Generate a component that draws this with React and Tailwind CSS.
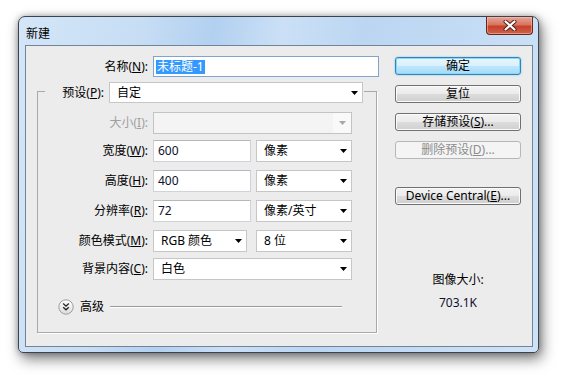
import React from "react";

function Arrow({ disabled }) {
  return (
    <svg width="7" height="4" viewBox="0 0 7 4" className="shrink-0">
      <path d="M0 0h7L3.5 4z" fill={disabled ? "#a8a8a8" : "#000"} />
    </svg>
  );
}

function Combo({ className = "", children, disabled }) {
  if (disabled) {
    return (
      <div className={"flex h-full border border-[#c3c3c3] bg-[#f4f4f4] " + className}>
        <div className="flex-1" />
        <div className="w-[18px] flex items-center justify-center bg-[#f9f9f9]">
          <Arrow disabled />
        </div>
      </div>
    );
  }
  return (
    <div className={"flex items-center justify-between h-full border border-[#c6c6c6] bg-white pl-[7px] pr-[4px] " + className}>
      <span>{children}</span>
      <Arrow />
    </div>
  );
}

function Field({ className = "", children }) {
  return (
    <div className={"flex items-center h-full border border-[#cfd3d8] border-t-[#b4b8be] bg-white pl-[4px] text-[#101030] " + className}>
      {children}
    </div>
  );
}

function Row({ label, k, className = "", disabled, children }) {
  return (
    <div className={"flex items-center h-[22px] " + className}>
      <div className={"w-[110px] text-right " + (disabled ? "text-[#a0a0a0]" : "")}>
        {label}(<span className="underline">{k}</span>):
      </div>
      <div className="flex h-full ml-[5px]">{children}</div>
    </div>
  );
}

function Btn({ children, kind = "normal", className = "" }) {
  const styles = {
    normal:
      "border-[#707070] bg-[linear-gradient(#f3f3f3,#ebebeb_48%,#dcdcdc_52%,#cfcfcf)] shadow-[inset_0_0_0_1px_#fbfbfb]",
    primary:
      "border-[#3c7fb1] bg-[linear-gradient(#eaf6fd,#d9f0fc_48%,#bee6fd_52%,#a7d9f5)] shadow-[inset_0_0_0_1px_#7fdcff,0_0_2px_#5fc4f5]",
    disabled: "border-[#b5b8ba] bg-[#f4f4f4] text-[#8c8c8c]",
  };
  return (
    <div className={"w-[126px] h-[18px] rounded-[3px] border flex items-center justify-center leading-none " + styles[kind] + " " + className}>
      {children}
    </div>
  );
}

function AdvIcon() {
  return (
    <svg width="16" height="16" viewBox="0 0 16 16">
      <defs>
        <linearGradient id="ag" x1="0" y1="0" x2="0" y2="1">
          <stop offset="0" stopColor="#ffffff" />
          <stop offset="1" stopColor="#dcdcdc" />
        </linearGradient>
      </defs>
      <circle cx="8" cy="8" r="7.2" fill="url(#ag)" stroke="#9c9c9c" />
      <path d="M5.2 4.6l2.8 2.6 2.8-2.6M5.2 8.2l2.8 2.6 2.8-2.6" fill="none" stroke="#222" strokeWidth="1.3" />
    </svg>
  );
}

export default function App() {
  return (
    <div className="w-[567px] h-[375px] bg-white pt-[16px] pl-[18px] text-[12px] text-black font-['Noto_Sans','Noto_Sans_CJK_SC',sans-serif] overflow-hidden">
      <div className="flex flex-col w-[521px] h-[337px] rounded-t-[7px] rounded-b-[5px] border border-[#3a4450] bg-[linear-gradient(100deg,#d4e6f8_0%,#c6ddf4_22%,#b2d0f0_34%,#cbe0f6_46%,#bcd6f2_60%,#c3dbf4_78%,#cfe3f7_100%)] shadow-[3px_6px_14px_rgba(0,0,0,0.5),0_0_6px_rgba(0,0,0,0.3)]">
        <div className="h-[28px] flex justify-between pl-[7px]">
          <span className="mt-[8px] leading-[17px]">新建</span>
          <div className="w-[47px] h-[18px] mr-[5px] rounded-b-[4px] border border-t-0 border-[#6b2418] bg-[linear-gradient(#e9a597,#d77560_45%,#c5412a_55%,#d0624b)] shadow-[inset_0_0_0_1px_rgba(255,200,190,0.5)] flex items-center justify-center">
            <svg width="14" height="11" viewBox="0 0 14 11">
              <path d="M2.5 1.5l9 8M11.5 1.5l-9 8" stroke="#4a2018" strokeWidth="4" strokeLinecap="round" />
              <path d="M2.5 1.5l9 8M11.5 1.5l-9 8" stroke="#ffffff" strokeWidth="2.2" strokeLinecap="round" />
            </svg>
          </div>
        </div>

        <div className="flex-1 mx-[6px] mb-[5px] mr-[5px] border border-[#71849a] bg-[#ececec] flex">
          <div className="w-[342px] flex flex-col ml-[11px] pt-[10px]">
            <div className="flex items-center h-[21px]">
              <div className="w-[111px] text-right">
                名称(<span className="underline">N</span>):
              </div>
              <div className="ml-[5px] w-[226px] h-full border border-[#7fa5cf] bg-white flex items-center pl-[2px]">
                <span className="bg-[#3399ff] text-white leading-[14px] px-[1px]">未标题-1</span>
              </div>
            </div>

            <div className="mt-[14px] w-[340px] h-[242px] border border-[#a9a9a9] shadow-[1px_1px_0_#fff] flex flex-col">
              <div className="-mt-[10px] ml-[7px] w-[319px] h-[21px] bg-[#ececec] flex items-center">
                <div className="w-[59px] text-right">
                  预设(<span className="underline">P</span>):
                </div>
                <Combo className="ml-[5px] w-[254px]">自定</Combo>
              </div>

              <Row label="大小" k="I" disabled className="mt-[9px]">
                <Combo disabled className="w-[199px]" />
              </Row>
              <Row label="宽度" k="W" className="mt-[6px]">
                <Field className="w-[98px]">600</Field>
                <Combo className="w-[96px] ml-[5px]">像素</Combo>
              </Row>
              <Row label="高度" k="H" className="mt-[8px]">
                <Field className="w-[98px]">400</Field>
                <Combo className="w-[96px] ml-[5px]">像素</Combo>
              </Row>
              <Row label="分辨率" k="R" className="mt-[8px]">
                <Field className="w-[98px]">72</Field>
                <Combo className="w-[96px] ml-[5px]">像素/英寸</Combo>
              </Row>
              <Row label="颜色模式" k="M" className="mt-[8px]">
                <Combo className="w-[94px]">RGB 颜色</Combo>
                <Combo className="w-[96px] ml-[9px]">8 位</Combo>
              </Row>
              <Row label="背景内容" k="C" className="mt-[6px]">
                <Combo className="w-[199px]">白色</Combo>
              </Row>

              <div className="mt-[18px] ml-[20px] flex items-center h-[17px]">
                <AdvIcon />
                <span className="ml-[6px]">高级</span>
                <div className="ml-[6px] w-[232px] h-[2px] border-t border-[#9a9a9a] border-b border-b-white" />
              </div>
            </div>
          </div>

          <div className="ml-[16px] pt-[11px] flex flex-col">
            <Btn kind="primary">确定</Btn>
            <Btn className="mt-[10px]">复位</Btn>
            <Btn className="mt-[10px]">
              存储预设(<span className="underline">S</span>)...
            </Btn>
            <Btn kind="disabled" className="mt-[10px]">
              删除预设(<span className="underline">D</span>)...
            </Btn>
            <Btn className="mt-[28px]">
              Device Central(<span className="underline">E</span>)...
            </Btn>
            <div className="mt-[67px] leading-[16px] text-center">图像大小:</div>
            <div className="mt-[7px] leading-[16px] text-center text-[#101030]">703.1K</div>
          </div>
        </div>
      </div>
    </div>
  );
}
